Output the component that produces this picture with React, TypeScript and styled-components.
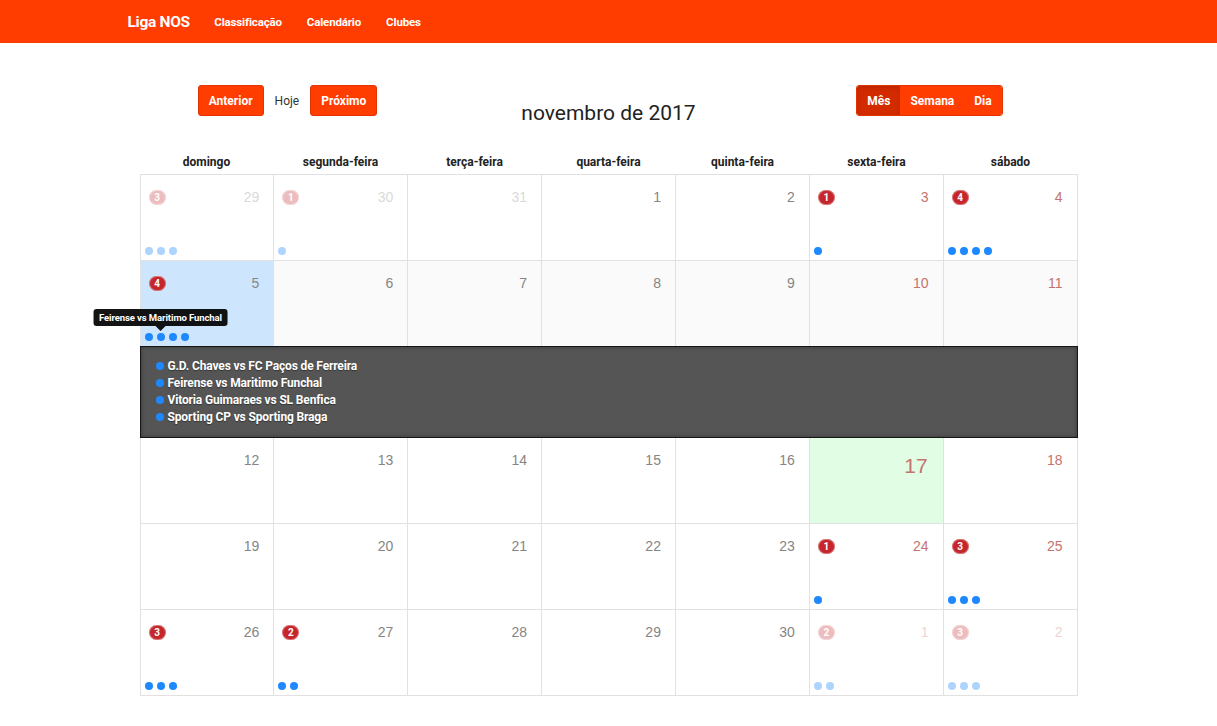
import styled, { createGlobalStyle } from "styled-components";

const GlobalStyle = createGlobalStyle`
  html, body {
    margin: 0;
    padding: 0;
    background: #fff;
    overflow: hidden;
  }
  body {
    font-family: Roboto, "Open Sans", sans-serif;
    color: #333;
  }
`;

const RED = "#ff3d00";
const EVENT_BLUE = "#1e88ff";

// Barra de navegação
const Navbar = styled.nav`
  height: 43px;
  background: ${RED};
`;

const NavInner = styled.div`
  width: 970px;
  height: 100%;
  margin: 0 auto;
  padding-left: 4px;
  box-sizing: border-box;
  display: flex;
  align-items: center;
`;

const Brand = styled.a`
  color: #fff;
  font-size: 15.5px;
  font-weight: 700;
  margin-right: 12px;
  letter-spacing: -0.3px;
`;

const NavLink = styled.a`
  color: #fff;
  font-size: 11.5px;
  font-weight: 700;
  padding: 0 12.5px;
  letter-spacing: -0.15px;
`;

const Page = styled.div`
  width: 938px;
  margin: 0 auto;
`;

const Toolbar = styled.div`
  display: grid;
  grid-template-columns: repeat(3, 296px);
  column-gap: 25px;
  margin-top: 42px;
  align-items: start;
`;

const ButtonRow = styled.div`
  display: flex;
  justify-content: center;
  align-items: center;
`;

const Button = styled.button`
  height: 31px;
  padding: 0 10px;
  background: ${RED};
  color: #fff;
  border: 1px solid #e23400;
  border-radius: 3px;
  font-family: inherit;
  font-size: 12px;
  font-weight: 700;
`;

const LinkButton = styled.span`
  padding: 0 11px;
  font-size: 12px;
  color: #333;
`;

const ButtonGroup = styled.div`
  display: flex;
  height: 31px;
  border: 1px solid #e23400;
  border-radius: 3px;
  overflow: hidden;
  box-sizing: border-box;
`;

const GroupButton = styled.button<{ $active?: boolean }>`
  border: none;
  padding: 0 10px;
  background: ${(p) => (p.$active ? "#d32b00" : RED)};
  box-shadow: ${(p) => (p.$active ? "inset 0 2px 4px rgba(0,0,0,0.12)" : "none")};
  color: #fff;
  font-family: inherit;
  font-size: 12px;
  font-weight: 700;
`;

const Title = styled.h3`
  margin: 15px 0 0;
  font-size: 21px;
  font-weight: 400;
  line-height: 26px;
  text-align: center;
  color: #222;
`;

const WeekHeader = styled.div`
  display: grid;
  grid-template-columns: repeat(7, 1fr);
  margin-top: 24px;
  height: 24px;
  line-height: 24px;
`;

const WeekDay = styled.div`
  text-align: center;
  font-size: 12px;
  font-weight: 700;
  color: #222;
`;

const Month = styled.div`
  border-top: 1px solid #e1e1e1;
`;

const WeekRow = styled.div<{ $open?: boolean }>`
  display: grid;
  grid-template-columns: repeat(7, 1fr);
  border-left: 1px solid #e1e1e1;
  background: ${(p) => (p.$open ? "#fafafa" : "#fff")};
`;

const Cell = styled.div<{ $bg?: string; $open?: boolean }>`
  position: relative;
  height: ${(p) => (p.$open ? "85px" : "86px")};
  box-sizing: border-box;
  border-right: 1px solid #e1e1e1;
  border-bottom: ${(p) => (p.$open ? "none" : "1px solid #e1e1e1")};
  background: ${(p) => p.$bg || "transparent"};
  display: flex;
  flex-direction: column;
  justify-content: space-between;
`;

const CellTop = styled.div<{ $faded?: boolean }>`
  display: flex;
  align-items: flex-start;
  justify-content: space-between;
  padding: 14px 14px 0 8px;
  opacity: ${(p) => (p.$faded ? 0.3 : 1)};
`;

const Badge = styled.span`
  display: inline-flex;
  align-items: center;
  justify-content: center;
  width: 17px;
  height: 15px;
  margin-top: 1px;
  border-radius: 8px;
  background: #c4262b;
  box-shadow: 0 0 0 1px rgba(255, 255, 255, 0.35) inset;
  color: #fff;
  font-size: 10px;
  font-weight: 700;
`;

const DayNumber = styled.span<{ $weekend?: boolean; $today?: boolean }>`
  margin-left: auto;
  font-family: "Liberation Sans", Arial, sans-serif;
  font-size: ${(p) => (p.$today ? "21px" : "14px")};
  line-height: ${(p) => (p.$today ? "28px" : "16px")};
  margin-right: ${(p) => (p.$today ? "1px" : "0")};
  color: ${(p) => (p.$weekend ? "#c4736d" : "#858585")};
`;

const Dots = styled.div<{ $faded?: boolean }>`
  display: flex;
  gap: 4px;
  padding: 0 0 5px 4px;
  opacity: ${(p) => (p.$faded ? 0.36 : 1)};
`;

const Dot = styled.span`
  position: relative;
  width: 8px;
  height: 8px;
  border-radius: 50%;
  background: ${EVENT_BLUE};
`;

const Tooltip = styled.span`
  position: absolute;
  bottom: calc(100% + 7px);
  left: 50%;
  transform: translateX(-50%);
  white-space: nowrap;
  background: rgba(0, 0, 0, 0.92);
  color: #fff;
  font-size: 9.5px;
  font-weight: 700;
  line-height: 17px;
  padding: 0 6px;
  border-radius: 3px;
  letter-spacing: -0.1px;

  &::after {
    content: "";
    position: absolute;
    top: 100%;
    left: 50%;
    margin-left: -5px;
    border: 5px solid transparent;
    border-bottom: none;
    border-top-color: rgba(0, 0, 0, 0.92);
  }
`;

const EventsPanel = styled.div`
  background: #555;
  border: 1px solid #151515;
  box-shadow: inset 0 0 4px rgba(0, 0, 0, 0.35);
  padding: 10px 14px 12px;
  height: 92px;
  box-sizing: border-box;
`;

const EventList = styled.ul`
  list-style: none;
  margin: 0;
  padding: 0;
`;

const EventItem = styled.li`
  display: flex;
  align-items: center;
  height: 17px;
  color: #fff;
  font-size: 12px;
  font-weight: 700;
  letter-spacing: -0.15px;
  text-shadow: 0 1px 1px rgba(0, 0, 0, 0.4);
`;

const EventDot = styled.span`
  width: 8px;
  height: 8px;
  border-radius: 50%;
  background: ${EVENT_BLUE};
  margin: 0 4px 0 1px;
`;

type Day = {
  n: number;
  out?: boolean;
  weekend?: boolean;
  events?: number;
  today?: boolean;
  selected?: boolean;
  tooltip?: string;
};

const weeks: Day[][] = [
  [
    { n: 29, out: true, events: 3 },
    { n: 30, out: true, events: 1 },
    { n: 31, out: true },
    { n: 1 },
    { n: 2 },
    { n: 3, weekend: true, events: 1 },
    { n: 4, weekend: true, events: 4 },
  ],
  [
    { n: 5, events: 4, selected: true, tooltip: "Feirense vs Maritimo Funchal" },
    { n: 6 },
    { n: 7 },
    { n: 8 },
    { n: 9 },
    { n: 10, weekend: true },
    { n: 11, weekend: true },
  ],
  [
    { n: 12 },
    { n: 13 },
    { n: 14 },
    { n: 15 },
    { n: 16 },
    { n: 17, weekend: true, today: true },
    { n: 18, weekend: true },
  ],
  [
    { n: 19 },
    { n: 20 },
    { n: 21 },
    { n: 22 },
    { n: 23 },
    { n: 24, weekend: true, events: 1 },
    { n: 25, weekend: true, events: 3 },
  ],
  [
    { n: 26, events: 3 },
    { n: 27, events: 2 },
    { n: 28 },
    { n: 29 },
    { n: 30 },
    { n: 1, out: true, weekend: true, events: 2 },
    { n: 2, out: true, weekend: true, events: 3 },
  ],
];

const weekDays = [
  "domingo",
  "segunda-feira",
  "terça-feira",
  "quarta-feira",
  "quinta-feira",
  "sexta-feira",
  "sábado",
];

const slideEvents = [
  "G.D. Chaves vs FC Paços de Ferreira",
  "Feirense vs Maritimo Funchal",
  "Vitoria Guimaraes vs SL Benfica",
  "Sporting CP vs Sporting Braga",
];

const DayCell = ({ day, open }: { day: Day; open?: boolean }) => {
  const bg = day.selected ? "#cde6fd" : day.today ? "#e1fde4" : undefined;
  const count = day.events || 0;
  return (
    <Cell $bg={bg} $open={open}>
      <CellTop $faded={day.out}>
        {count > 0 && <Badge>{count}</Badge>}
        <DayNumber $weekend={day.weekend} $today={day.today}>
          {day.n}
        </DayNumber>
      </CellTop>
      <Dots $faded={day.out}>
        {Array.from({ length: count }).map((_, i) => (
          <Dot key={i}>
            {day.tooltip && i === 1 && <Tooltip>{day.tooltip}</Tooltip>}
          </Dot>
        ))}
      </Dots>
    </Cell>
  );
};

export default function App() {
  return (
    <>
      <GlobalStyle />
      <Navbar>
        <NavInner>
          <Brand>Liga NOS</Brand>
          <NavLink>Classificação</NavLink>
          <NavLink>Calendário</NavLink>
          <NavLink>Clubes</NavLink>
        </NavInner>
      </Navbar>

      <Page>
        <Toolbar>
          <ButtonRow>
            <Button>Anterior</Button>
            <LinkButton>Hoje</LinkButton>
            <Button>Próximo</Button>
          </ButtonRow>
          <Title>novembro de 2017</Title>
          <ButtonRow>
            <ButtonGroup>
              <GroupButton $active>Mês</GroupButton>
              <GroupButton>Semana</GroupButton>
              <GroupButton>Dia</GroupButton>
            </ButtonGroup>
          </ButtonRow>
        </Toolbar>

        <WeekHeader>
          {weekDays.map((d) => (
            <WeekDay key={d}>{d}</WeekDay>
          ))}
        </WeekHeader>

        <Month>
          {weeks.map((week, wi) => (
            <div key={wi}>
              <WeekRow $open={wi === 1}>
                {week.map((day, di) => (
                  <DayCell key={di} day={day} open={wi === 1} />
                ))}
              </WeekRow>
              {wi === 1 && (
                <EventsPanel>
                  <EventList>
                    {slideEvents.map((e) => (
                      <EventItem key={e}>
                        <EventDot />
                        {e}
                      </EventItem>
                    ))}
                  </EventList>
                </EventsPanel>
              )}
            </div>
          ))}
        </Month>
      </Page>
    </>
  );
}
